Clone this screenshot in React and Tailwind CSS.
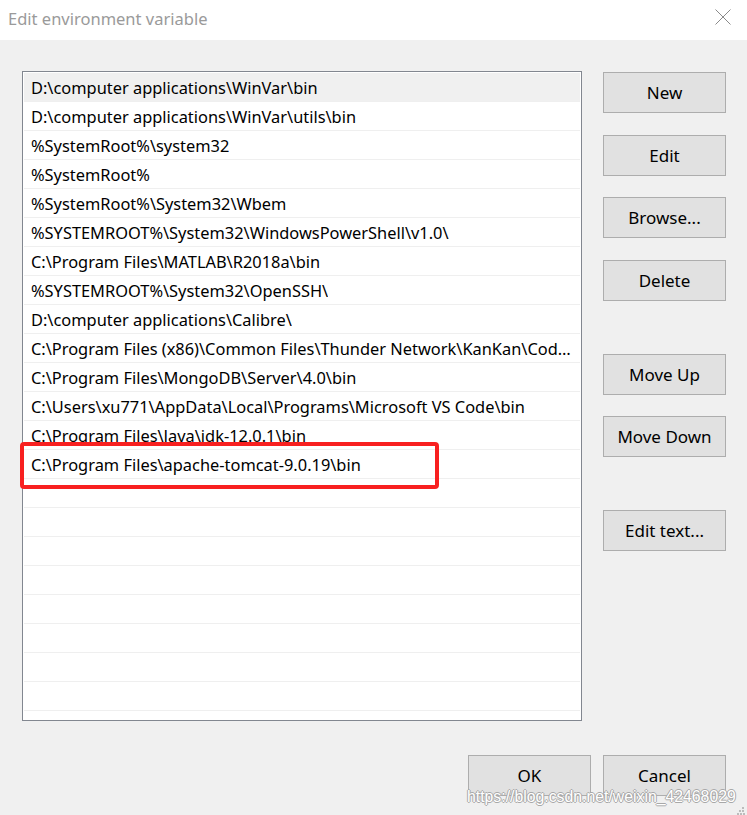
import React from 'react'

const paths = [
  'D:\\computer applications\\WinVar\\bin',
  'D:\\computer applications\\WinVar\\utils\\bin',
  '%SystemRoot%\\system32',
  '%SystemRoot%',
  '%SystemRoot%\\System32\\Wbem',
  '%SYSTEMROOT%\\System32\\WindowsPowerShell\\v1.0\\',
  'C:\\Program Files\\MATLAB\\R2018a\\bin',
  '%SYSTEMROOT%\\System32\\OpenSSH\\',
  'D:\\computer applications\\Calibre\\',
  'C:\\Program Files (x86)\\Common Files\\Thunder Network\\KanKan\\Codecs',
  'C:\\Program Files\\MongoDB\\Server\\4.0\\bin',
  'C:\\Users\\xu771\\AppData\\Local\\Programs\\Microsoft VS Code\\bin',
  'C:\\Program Files\\Java\\jdk-12.0.1\\bin',
  'C:\\Program Files\\apache-tomcat-9.0.19\\bin',
]

const rows = [...paths, ...Array(8).fill('')]

const Btn = ({ children, className = '' }) => (
  <button className={`w-[123px] h-[41px] bg-[#e1e1e1] border border-[#adadad] text-[17px] text-black leading-[20px] ${className}`}>
    {children}
  </button>
)

export default function App() {
  return (
    <div className="w-[747px] h-[815px] bg-[#f0f0f0] flex flex-col relative overflow-hidden" style={{ fontFamily: '"Noto Sans", "Open Sans", sans-serif' }}>
      {/* title bar */}
      <div className="h-[40px] bg-white flex items-center justify-between shrink-0">
        <span className="pl-[8px] text-[16.5px] text-[#9a9a9a] leading-[20px] pb-[2px]">Edit environment variable</span>
        <svg width="16" height="16" viewBox="0 0 16 16" className="mr-[16px] mb-[6px]">
          <path d="M0.5 0.5 L15.5 15.5 M15.5 0.5 L0.5 15.5" stroke="#8a8a8a" strokeWidth="1" fill="none" />
        </svg>
      </div>

      <div className="flex pl-[22px] pt-[31px]">
        {/* list */}
        <div className="relative w-[560px] h-[650px] bg-white border border-[#828790] pt-[1px] px-[1px]">
          {rows.map((r, i) => (
            <div key={i} className={`h-[29px] border-b border-[#efefef] flex items-center pl-[7px] pr-[4px] ${i === 0 ? 'bg-[#f0f0f0]' : ''}`}>
              <span className="text-[16.4px] text-black truncate leading-[22px] pt-[1px]">{r}</span>
            </div>
          ))}
          <div className="absolute left-[-3px] top-[370px] w-[419px] h-[47px] border-[4px] border-[#f82020] rounded-[4px]" />
        </div>

        {/* side buttons */}
        <div className="flex flex-col pl-[21px] pt-[1px]">
          <Btn>New</Btn>
          <Btn className="mt-[22px]">Edit</Btn>
          <Btn className="mt-[21px]">Browse...</Btn>
          <Btn className="mt-[22px]">Delete</Btn>
          <Btn className="mt-[53px]">Move Up</Btn>
          <Btn className="mt-[21px]">Move Down</Btn>
          <Btn className="mt-[53px]">Edit text...</Btn>
        </div>
      </div>

      {/* bottom buttons */}
      <div className="flex justify-end gap-[12px] pr-[21px] pt-[34px]">
        <Btn>OK</Btn>
        <Btn>Cancel</Btn>
      </div>

      {/* watermark */}
      <span
        className="absolute left-[467px] top-[787px] text-[15.8px] leading-[20px] text-white"
        style={{ fontFamily: '"Liberation Sans", Arial, sans-serif', textShadow: '1px 0 0 #a8a8a8, -1px 0 0 #a8a8a8, 0 1px 0 #a8a8a8, 0 -1px 0 #a8a8a8' }}
      >
        https://blog.csdn.net/weixin_42468029
      </span>

      {/* resize grip */}
      <svg width="8" height="8" viewBox="0 0 8 8" className="absolute right-[2px] bottom-[0px]">
        <rect x="5" y="0" width="2" height="2" fill="#bcbcbc" />
        <rect x="2" y="3" width="2" height="2" fill="#bcbcbc" />
        <rect x="5" y="3" width="2" height="2" fill="#bcbcbc" />
        <rect x="0" y="6" width="2" height="2" fill="#bcbcbc" />
        <rect x="3" y="6" width="2" height="2" fill="#bcbcbc" />
        <rect x="6" y="6" width="2" height="2" fill="#bcbcbc" />
      </svg>
    </div>
  )
}
